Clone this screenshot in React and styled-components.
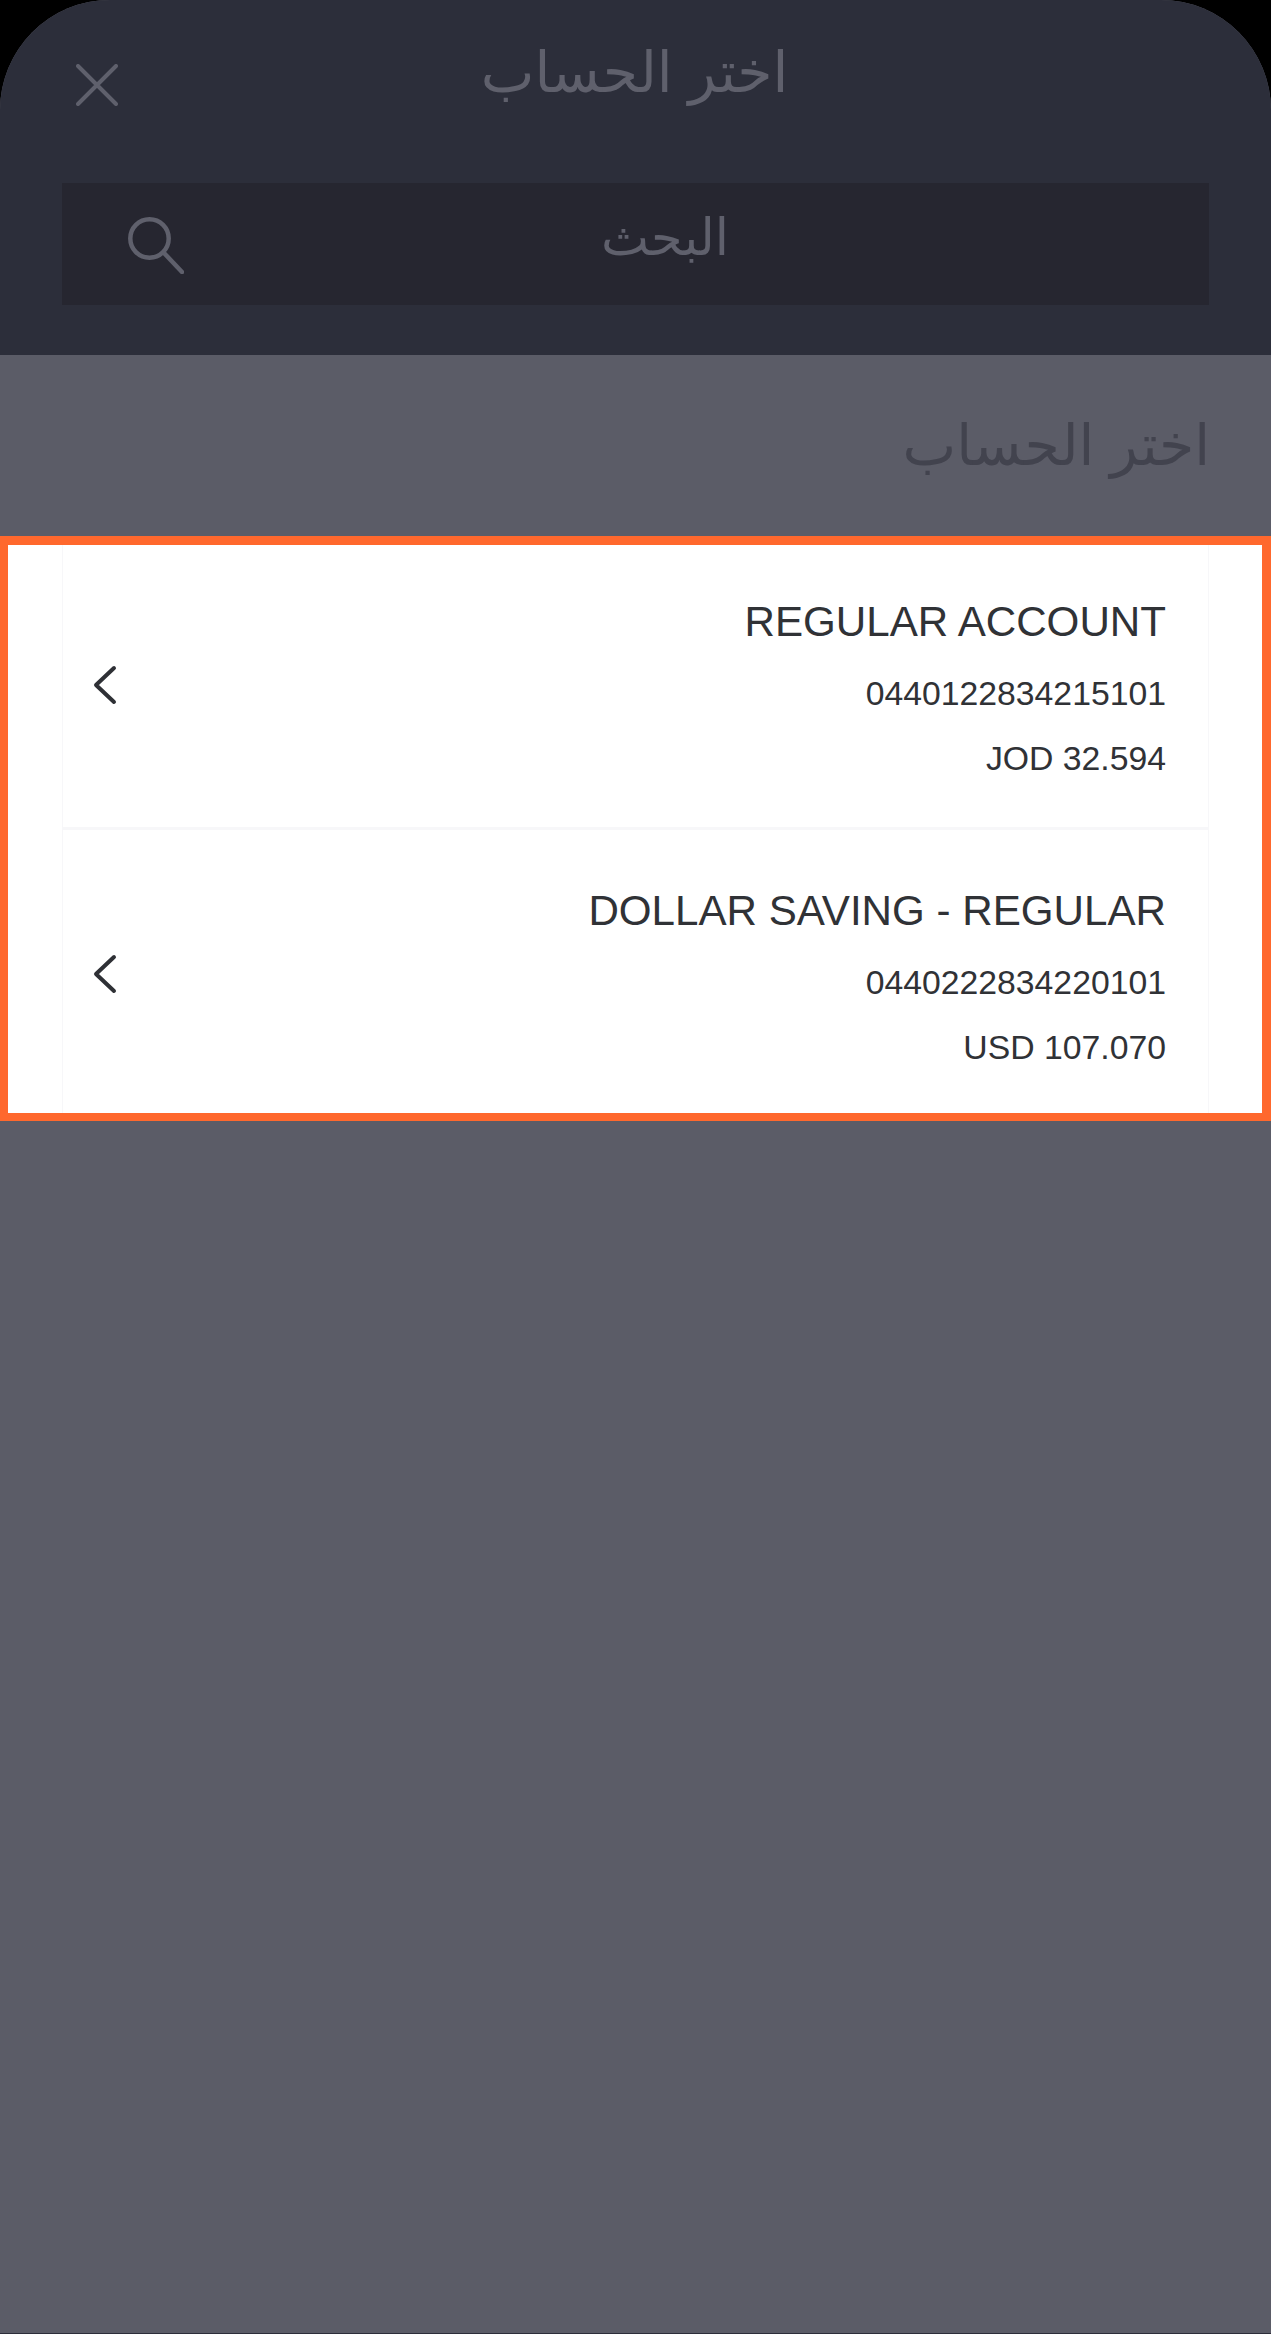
import React from 'react';
import styled, { createGlobalStyle } from 'styled-components';

const GlobalStyle = createGlobalStyle`
  html, body {
    margin: 0;
    padding: 0;
    background: #000;
  }
`;

const Sheet = styled.div`
  width: 1271px;
  height: 2334px;
  box-sizing: border-box;
  display: flex;
  flex-direction: column;
  background: #5b5c67;
  border-bottom: 1px solid #2c2e3a;
  border-radius: 110px 110px 0 0;
  overflow: hidden;
  font-family: "Liberation Sans", "DejaVu Sans", sans-serif;
`;

const Header = styled.header`
  height: 355px;
  box-sizing: border-box;
  padding: 0 62px;
  background: #2c2e3a;
  display: flex;
  flex-direction: column;
  flex-shrink: 0;
`;

const TopBar = styled.div`
  height: 183px;
  position: relative;
  display: flex;
  justify-content: center;
`;

const HeaderTitle = styled.h1`
  margin: 36px 2px 0 0;
  font-size: 57px;
  line-height: 72px;
  font-weight: 400;
  color: #5f606c;
`;

const CloseButton = styled.button`
  position: absolute;
  left: 14px;
  top: 64px;
  width: 42px;
  height: 42px;
  padding: 0;
  border: none;
  background: none;
  display: block;
`;

const SearchBox = styled.div`
  height: 122px;
  background: #262630;
  display: flex;
  align-items: flex-start;
  padding: 34px 63px 0 66px;
  box-sizing: border-box;
`;

const SearchText = styled.div`
  flex: 1;
  text-align: center;
  font-size: 51px;
  line-height: 42px;
  color: #5f606c;
`;

const SectionTitle = styled.h2`
  margin: 0;
  height: 181px;
  box-sizing: border-box;
  padding: 54px 61px 0 0;
  text-align: right;
  font-size: 57px;
  line-height: 72px;
  font-weight: 400;
  color: #42434e;
`;

const Highlight = styled.section`
  border: solid #ff682d;
  border-width: 9px 9px 8px 8px;
  background: #fff;
  padding: 0 53px 0 54px;
`;

const AccountRow = styled.div`
  height: ${(p) => (p.$last ? '283px' : '285px')};
  box-sizing: border-box;
  display: flex;
  align-items: flex-start;
  justify-content: space-between;
  padding: ${(p) => (p.$last ? '57px' : '53px')} 42px 0 30px;
  border: solid #f7f7f9;
  border-width: 0 1px ${(p) => (p.$last ? '0' : '3px')};
`;

const Chevron = styled.svg`
  width: 24px;
  height: 40px;
  margin-top: 67px;
  flex-shrink: 0;
`;

const AccountInfo = styled.div`
  text-align: right;
  color: #303236;
`;

const AccountName = styled.div`
  font-size: 42.15px;
  line-height: 48px;
  margin-bottom: 27px;
`;

const AccountLine = styled.div`
  font-size: 33.75px;
  line-height: 40px;
  margin-top: ${(p) => (p.$tight ? '25px' : '0')};
`;

const accounts = [
  { name: 'REGULAR ACCOUNT', number: '0440122834215101', balance: 'JOD 32.594' },
  { name: 'DOLLAR SAVING - REGULAR', number: '0440222834220101', balance: 'USD 107.070' },
];

function App() {
  return (
    <>
      <GlobalStyle />
      <Sheet>
        <Header>
          <TopBar>
            <CloseButton aria-label="close">
              <svg width="42" height="42" viewBox="0 0 42 42" fill="none" stroke="#5f606c" strokeWidth="4" strokeLinecap="round">
                <path d="M2 2 L40 40 M40 2 L2 40" />
              </svg>
            </CloseButton>
            <HeaderTitle dir="rtl">اختر الحساب</HeaderTitle>
          </TopBar>
          <SearchBox>
            <svg width="56" height="57" viewBox="0 0 56 57" fill="none" stroke="#5f606c" strokeWidth="4.5" strokeLinecap="round">
              <circle cx="21.5" cy="21.5" r="19.2" />
              <path d="M36 36 L54 55" />
            </svg>
            <SearchText dir="rtl">البحث</SearchText>
          </SearchBox>
        </Header>
        <SectionTitle dir="rtl">اختر الحساب</SectionTitle>
        <Highlight>
          {accounts.map((a, i) => (
            <AccountRow key={a.number} $last={i === accounts.length - 1}>
              <Chevron viewBox="0 0 24 40" fill="none" stroke="#2e3035" strokeWidth="4" strokeLinecap="round" strokeLinejoin="round">
                <path d="M21 3 L3 20 L21 37" />
              </Chevron>
              <AccountInfo>
                <AccountName>{a.name}</AccountName>
                <AccountLine>{a.number}</AccountLine>
                <AccountLine $tight>{a.balance}</AccountLine>
              </AccountInfo>
            </AccountRow>
          ))}
        </Highlight>
      </Sheet>
    </>
  );
}

export default App;
